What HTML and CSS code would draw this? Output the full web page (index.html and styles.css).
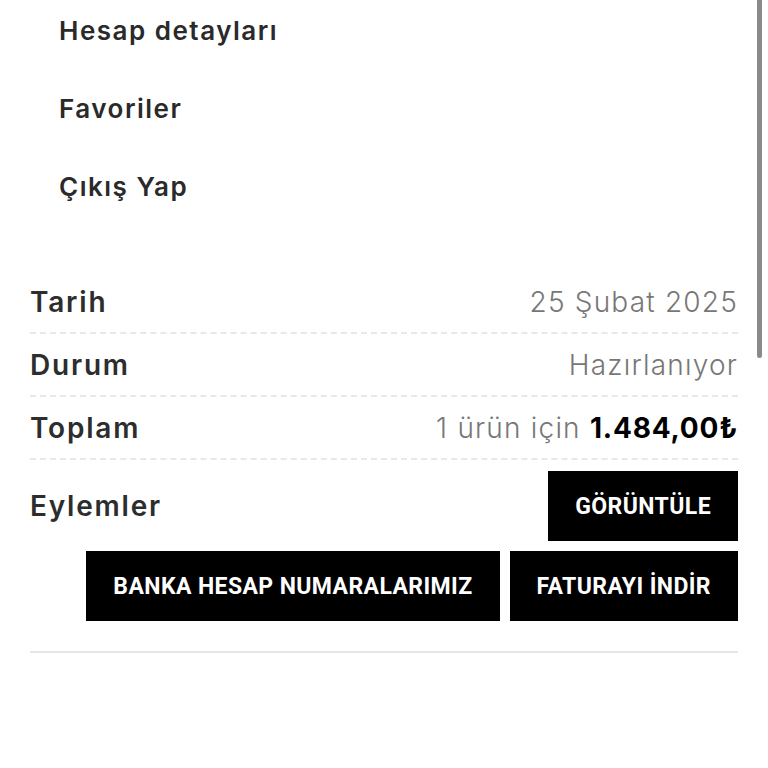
FILE: index.html
```html
<!DOCTYPE html>
<html>
<head>
    <meta name="viewport" content="width=device-width, initial-scale=1.0">
    <link rel="stylesheet" href="styles.css">
</head>
<body>
    <div class="scroll-thumb"></div>

    <ul class="account-nav">
        <li><a href="#">Hesap detayları</a></li>
        <li><a href="#">Favoriler</a></li>
        <li><a href="#">Çıkış Yap</a></li>
    </ul>

    <div class="order">
        <div class="order-row">
            <div class="order-label">Tarih</div>
            <div class="order-value">25 Şubat 2025</div>
        </div>
        <div class="order-row">
            <div class="order-label">Durum</div>
            <div class="order-value">Hazırlanıyor</div>
        </div>
        <div class="order-row">
            <div class="order-label">Toplam</div>
            <div class="order-value">1 ürün için <strong>1.484,00₺</strong></div>
        </div>
        <div class="order-actions">
            <div class="actions-line">
                <div class="order-label">Eylemler</div>
                <a href="#" class="btn">GÖRÜNTÜLE</a>
            </div>
            <div class="actions-line end">
                <a href="#" class="btn">BANKA HESAP NUMARALARIMIZ</a>
                <a href="#" class="btn">FATURAYI İNDİR</a>
            </div>
        </div>
    </div>
</body>
</html>
```

FILE: styles.css
```css
* {
    margin: 0;
    padding: 0;
    box-sizing: border-box;
}

html, body {
    width: 100%;
    height: 100%;
    overflow: hidden;
}

body {
    background: #fff;
    font-family: Inter, "DejaVu Sans", sans-serif;
    color: #2d2d2d;
}

a {
    text-decoration: none;
    color: inherit;
}

/* fake mobile scrollbar */
.scroll-thumb {
    position: fixed;
    top: 0;
    right: 6px;
    width: 5px;
    height: 358px;
    background: #8a8a8a;
    border-radius: 0 0 3px 3px;
}

.account-nav {
    list-style: none;
    margin-top: -9px;
    padding-left: 59px;
}

.account-nav li {
    height: 78px;
    display: flex;
    align-items: center;
    font-size: 26px;
    font-weight: 600;
    letter-spacing: 1.5px;
    color: #2a2a2a;
}

.order {
    margin: 46px 30px 0;
    border-bottom: 2px solid #e6e6e6;
}

.order-row {
    height: 63px;
    display: flex;
    justify-content: space-between;
    align-items: center;
    border-bottom: 2px dashed #e8e8e8;
}

.order-label {
    font-size: 28px;
    font-weight: 600;
    letter-spacing: 1.8px;
    color: #2d2d2d;
}

.order-value {
    font-size: 28px;
    font-weight: 300;
    letter-spacing: 1.2px;
    color: #777;
}

.order-value strong {
    font-weight: 700;
    letter-spacing: 0.8px;
    color: #000;
}

.order-actions {
    padding: 11px 0 30px;
    display: flex;
    flex-direction: column;
    gap: 10px;
}

.actions-line {
    display: flex;
    justify-content: space-between;
    align-items: center;
    gap: 10px;
}

.actions-line.end {
    justify-content: flex-end;
}

.btn {
    height: 70px;
    padding: 0 27px;
    display: flex;
    align-items: center;
    background: #000;
    color: #fff;
    font-family: Roboto, sans-serif;
    font-size: 23px;
    font-weight: 700;
    letter-spacing: 0.4px;
}
```
